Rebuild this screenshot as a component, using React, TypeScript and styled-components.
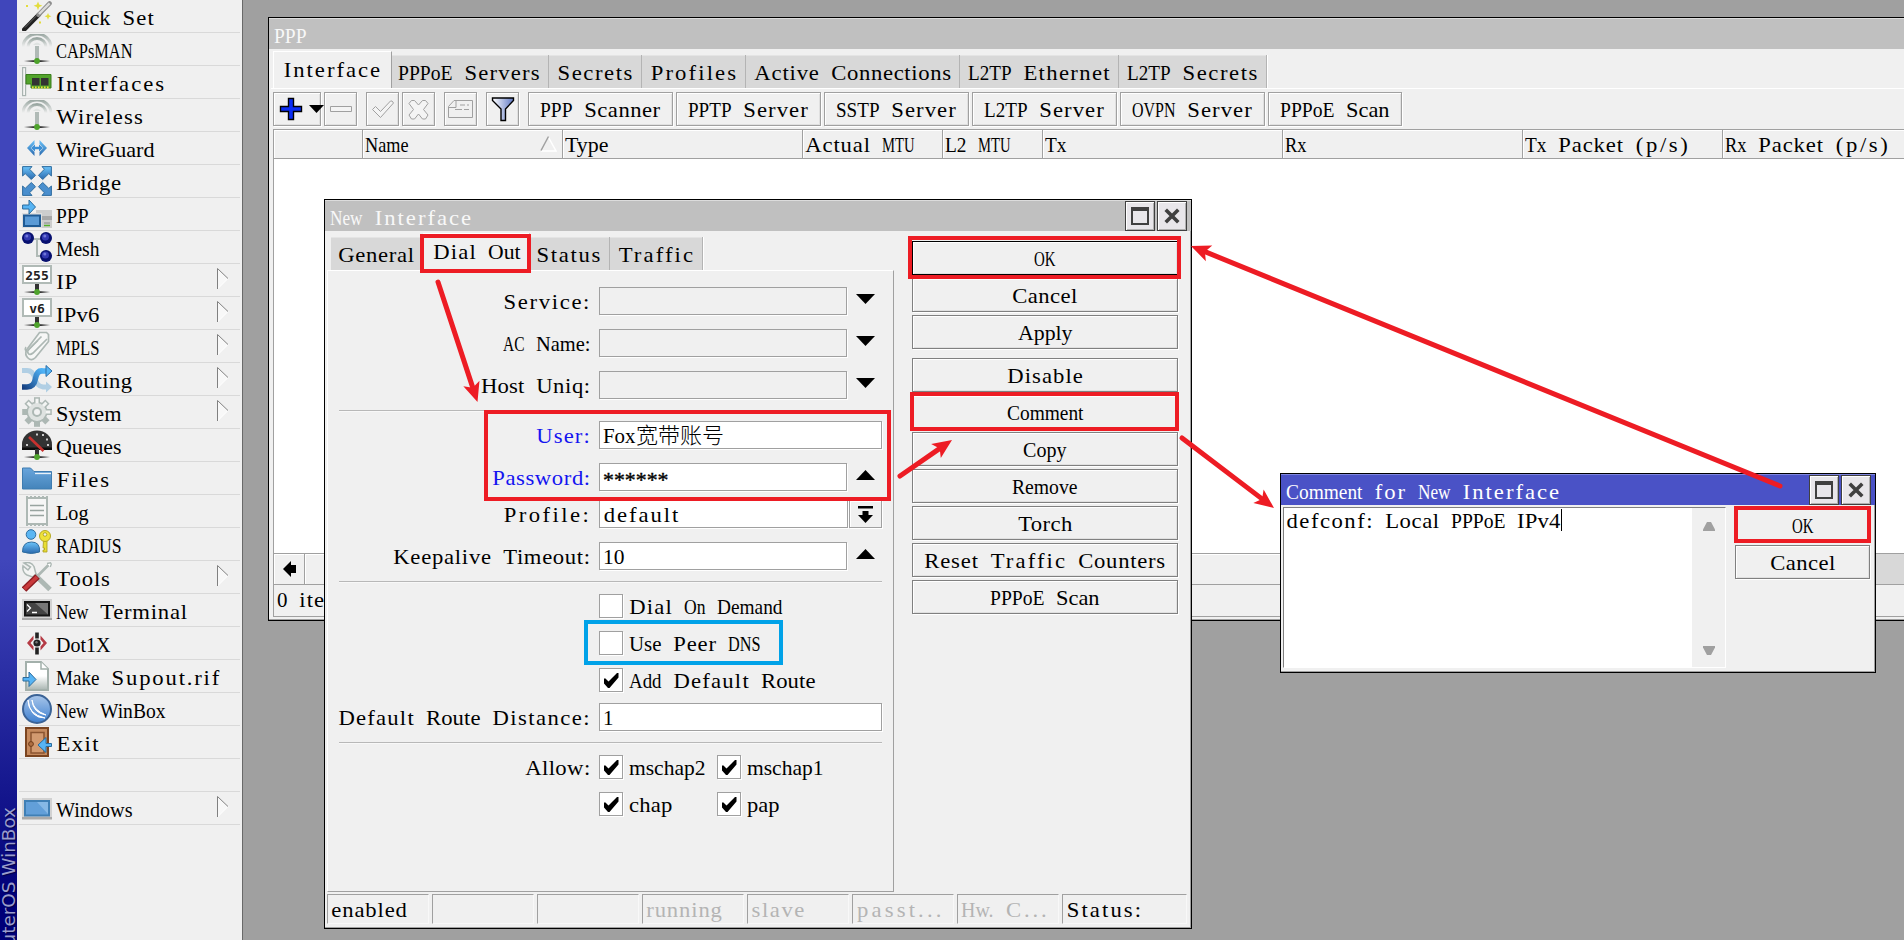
import React from "react";
import styled, { createGlobalStyle, css } from "styled-components";

const CELL = 11;
const SERIF = '"Liberation Serif", "Noto Sans CJK SC", serif';

const GlobalStyle = createGlobalStyle`
  * { box-sizing: border-box; }
  html, body { margin: 0; padding: 0; }
  body {
    width: 1904px;
    height: 940px;
    overflow: hidden;
    background: #a0a0a0;
    color: #000;
    font-family: ${SERIF};
    font-size: 22px;
    line-height: 24px;
  }
`;

/* ---------- cell-width text ---------- */

const Run = styled.span`
  display: inline-flex;
  white-space: pre;
  line-height: 24px;
  height: 24px;
  text-align: left;
`;
const Word = styled.span<{ $light?: boolean }>`
  display: block;
  flex: none;
  white-space: pre;
  transform-origin: 0 50%;
  font-weight: ${(p) => (p.$light ? 300 : 400)};
`;

let ctx: CanvasRenderingContext2D | null = null;
const measure = (s: string) => {
  if (!ctx) {
    ctx = document.createElement("canvas").getContext("2d");
    if (ctx) ctx.font = `22px ${SERIF}`;
  }
  return ctx ? ctx.measureText(s).width : s.length * CELL;
};

/* Fits each word to a fixed character grid: wide words are condensed, narrow ones spaced out. */
const MAX_STRETCH = 1.03;
const T = ({ children }: { children: string }) => (
  <Run>
    {(children.match(/[^\x00-\x7f]+| +|[!-~]+/g) || []).map((w, i) => {
      if (/[^\x00-\x7f]/.test(w)) return <Word key={i} $light>{w}</Word>;
      const target = w.length * CELL;
      if (w[0] === " ") return <Word key={i} style={{ width: target }}>{w}</Word>;
      const natural = measure(w);
      const scale = Math.min(MAX_STRETCH, (target - 0.5) / natural);
      const space = Math.max(0, (target - 0.5) / scale - natural) / w.length;
      return (
        <Word key={i} style={{ width: target, transform: `scaleX(${scale})`, letterSpacing: space, textIndent: space / 3 }}>
          {w}
        </Word>
      );
    })}
  </Run>
);

/* ---------- sidebar ---------- */

const Screen = styled.div`
  position: relative;
  display: flex;
  width: 1904px;
  height: 940px;
  overflow: hidden;
`;
const Brand = styled.div`
  width: 17px;
  height: 940px;
  flex: none;
  overflow: hidden;
  display: flex;
  align-items: flex-start;
  padding-top: 807px;
  background: linear-gradient(#4046bb 0, #4046bb 560px, #000078 900px);
  color: #9a9dcc;
  font: 18.4px/17px "DejaVu Sans", sans-serif;
  text-shadow: -1px 1px 1px #00004a;
`;
const BrandText = styled.span`
  writing-mode: vertical-rl;
  transform: rotate(180deg);
  white-space: nowrap;
`;
const Menu = styled.nav`
  width: 226px;
  height: 940px;
  flex: none;
  background: #f0f0f0;
  border-right: 1px solid #696969;
  padding: 0 2px;
`;
const MenuRow = styled.div`
  height: 33px;
  display: flex;
  align-items: center;
  border-bottom: 1px solid #d9d9d9;
  padding-left: 3px;
`;
const IconBox = styled.svg`
  width: 30px;
  height: 30px;
  flex: none;
  margin-right: 4px;
`;
const MenuLabel = styled.span`
  flex: 1;
  padding-top: 4px;
  height: 28px;
`;
const SubArrow = styled.svg`
  width: 12px;
  height: 22px;
  flex: none;
  margin: -3px 11px 0 0;
`;

const Antenna = (
  <>
    <path d="M1 13a14 13 0 0 1 28 0" fill="none" stroke="url(#fade)" strokeWidth="3" />
    <path d="M6 13a9 8.5 0 0 1 18 0" fill="none" stroke="url(#fade)" strokeWidth="3" />
    <path d="M11 11q4-5 8 0" fill="#dfe3e1" />
    <rect x="13" y="12" width="4" height="14" fill="#b0bab6" />
    <rect x="2" y="26.3" width="26" height="1.6" fill="url(#base)" />
    <circle cx="15" cy="27" r="2.9" fill="#4ea32b" />
  </>
);
const Plate = (label: string) => (
  <>
    <rect x="1" y="1" width="28" height="17" fill="#fff" stroke="#b0bab6" strokeWidth="2" />
    <text x="15" y="14.5" textAnchor="middle" fontFamily="DejaVu Sans Mono" fontWeight="bold" fontSize="13" fill="#222">{label}</text>
    <rect x="13" y="19" width="4" height="7" fill="#333" />
    <rect x="2" y="26.3" width="26" height="1.6" fill="url(#base)" />
    <circle cx="15" cy="27" r="2.9" fill="#4ea32b" />
  </>
);
const Ball = ({ x, y }: { x: number; y: number }) => (
  <>
    <circle cx={x} cy={y} r="6" fill="#07106f" />
    <circle cx={x - 0.6} cy={y - 1} r="3.6" fill="#3238b0" />
    <circle cx={x - 1.2} cy={y - 2} r="1.5" fill="#7077d8" />
  </>
);
const OUT_ARROW = "M.6 .6H10L7.6 3.2 13.5 9.3 9.3 13.5 3.2 7.6 .6 10Z";

const icons: Record<string, React.ReactNode> = {
  wand: (
    <>
      <path d="M2.2 28.6 17 13.5" stroke="#222" strokeWidth="4.4" strokeLinecap="round" />
      <path d="M3 26.5 16 13.3" stroke="#666" strokeWidth="1" />
      <path d="M16.6 13.8 27.6 2.4" stroke="#8d8d8d" strokeWidth="4.4" strokeLinecap="round" />
      <path d="M17 13 27.6 2.4" stroke="#dcdcdc" strokeWidth="2.4" />
      <path d="M16 .4 17.2 3.6 20.4 4.8 17.2 6 16 9.2 14.8 6 11.6 4.8 14.8 3.6ZM26 12 27 14.3 29.4 15.3 27 16.3 26 18.8 25 16.3 22.6 15.3 25 14.3Z" fill="#e3dc3c" />
      <path d="M4 4h2v2H4zM17 20.500h2v2h-2z" fill="#e3dc3c" />
    </>
  ),
  antenna: Antenna,
  card: (
    <>
      <rect x=".6" y=".6" width="3" height="28" fill="#f5f5f5" stroke="#a9b4b0" strokeWidth="1.2" />
      <path d="M4 7.500h25v13.500H9v-4H4z" fill="#53a42c" stroke="#3a7d1c" />
      <path d="M10 11h7.500v7.500H10zM19 11h7.500v7.500H19z" fill="#333" />
      <path d="M10 20.500h17" stroke="#e8e23c" strokeWidth="2" strokeDasharray="1.600 1.400" />
    </>
  ),
  guard: (
    <>
      <path d="M5 15 12.500 7v4L8.700 15l3.800 4v4zM25 15 17.500 7v4l3.800 4-3.800 4v4z" fill="url(#blue)" />
      <path d="M9 15l4-3.500v2.300h4v-2.300l4 3.500-4 3.500v-2.300h-4v2.300z" fill="#3b8fd6" />
    </>
  ),
  bridge: (
    <g fill="url(#blue)" stroke="#2f6d9f" strokeWidth="1">
      <path d={OUT_ARROW} />
      <path d={OUT_ARROW} transform="translate(30 0) scale(-1 1)" />
      <path d={OUT_ARROW} transform="translate(0 30) scale(1 -1)" fill="#4a8fce" />
      <path d={OUT_ARROW} transform="translate(30 30) scale(-1 -1)" fill="#4a8fce" />
    </g>
  ),
  ppp: (
    <>
      <rect x="14" y="11" width="16" height="18" fill="#cdcdcd" />
      <path d="M20 17h10v4H20z" fill="#a8a8a8" />
      <path d="M22 24h6" stroke="#888" />
      <path d="M22 26.500h6" stroke="#55b02c" strokeWidth="1.500" />
      <rect x="0" y="14" width="20" height="15" fill="#dedede" />
      <rect x="2" y="16.500" width="16" height="10.500" fill="#5b9bd6" stroke="#1f5b95" strokeWidth="2" />
      <path d="M.6 6h6.400V1l6.500 7-6.500 7v-5H.6z" fill="#57b4f4" stroke="#2b6c9e" />
    </>
  ),
  mesh: (
    <>
      <path d="M8 7h14M15 7v17h8" fill="none" stroke="#b0bab6" strokeWidth="2" />
      <Ball x={6} y={6} />
      <Ball x={24} y={6} />
      <Ball x={24} y={24} />
    </>
  ),
  ip: Plate("255"),
  ip6: Plate("v6"),
  clip: (
    <>
      <path d="M17.500 1.500h7l2 2v7L13.500 26.500q-4 4-7.500.5t-1.500-8z" fill="#f6f7f6" stroke="#adb8b4" strokeWidth="1.700" />
      <path d="M25 8 11 22q-3 2.500-4.700.5T7 18L19.500 5.500" fill="none" stroke="#adb8b4" strokeWidth="1.700" />
      <path d="M4 16q-2 3 1 5M6 19.500l10-10" fill="none" stroke="#adb8b4" strokeWidth="1.400" />
    </>
  ),
  routing: (
    <>
      <path d="M0 6.500h5q6 0 8 8t8 8.500h4" fill="none" stroke="#b1cfe4" strokeWidth="5" />
      <path d="M24 17.500 30 23l-6 5.500z" fill="#b1cfe4" />
      <path d="M0 23h5q7 0 8.500-8.500T21 7h3" fill="none" stroke="url(#deep)" strokeWidth="5.500" />
      <path d="M24 1.500 30 7l-6 5.500z" fill="#55b5f5" stroke="#2c6fa8" />
    </>
  ),
  gear: (
    <>
      <g fill="#adb8b4">
        {[0, 45, 90, 135].map((a) => (
          <rect key={a} x="12" y=".2" width="6" height="29.600" transform={`rotate(${a} 15 15)`} />
        ))}
        <circle cx="15" cy="15" r="10.500" />
      </g>
      <g fill="#f4f5f4">
        {[0, 45, 90, 135].map((a) => (
          <rect key={a} x="13.500" y="1.700" width="3" height="13" transform={`rotate(${a - 45} 15 15)`} />
        ))}
        <circle cx="15" cy="15" r="9" fill="#dfe3e1" />
      </g>
      <circle cx="15" cy="15" r="4" fill="#f2f2f2" stroke="#adb8b4" strokeWidth="2" />
    </>
  ),
  gauge: (
    <>
      <path d="M0 19V14.500a15 14 0 0 1 30 0V19z" fill="#333" />
      <path d="M0 17.500h30V20H0z" fill="#0d0d0d" />
      <path d="M4 14h2v2H4zM7 7h2v2H7zM14 3.500h2v2h-2zM20 4h2v2h-2zM24 8.500h2v2h-2zM25 14h2v2h-2z" fill="#ccc" />
      <rect x="13" y="19" width="4" height="7" fill="#333" />
      <path d="M7 7 21.500 21" stroke="#c8322f" strokeWidth="2.600" />
      <rect x="2" y="26.300" width="26" height="1.600" fill="url(#base)" />
      <circle cx="15" cy="27" r="2.900" fill="#4ea32b" />
    </>
  ),
  folder: (
    <>
      <path d="M.5 5h8l3.500 3.500h17.500V26H.5z" fill="url(#folder)" stroke="#3f7cb0" />
      <path d="M13 10.500h16" stroke="#e9f1f8" strokeWidth="1.300" />
    </>
  ),
  log: (
    <>
      <path d="M5 2h20v26H5z" fill="#f6f6f6" stroke="#adb8b4" strokeWidth="2" />
      <path d="M4 1h22M4 29h22" stroke="#adb8b4" strokeWidth="2" strokeDasharray="2 2" />
      <path d="M8 9.500h14M8 14.500h14M8 19.500h14" stroke="#98a4a0" strokeWidth="1.600" />
    </>
  ),
  radius: (
    <>
      <path d="M.5 23q0-10 9-10t8 10q-8 3-17 0z" fill="url(#blue)" stroke="#2f6d9f" />
      <circle cx="9" cy="5.500" r="4.800" fill="#5bb6f3" stroke="#2f6d9f" />
      <path d="M21.500 12h3.500v11h-4v-2h1.500v-2H21z" fill="#e8dd35" stroke="#aa9d1c" strokeWidth=".8" />
      <circle cx="23" cy="7" r="5.500" fill="#eee13a" stroke="#b5a822" />
      <circle cx="23" cy="5.500" r="1.800" fill="#f0f0f0" stroke="#b5a822" />
    </>
  ),
  tools: (
    <>
      <path d="M13 13 28 27.500" stroke="#adb8b4" strokeWidth="5" />
      <path d="M2 1Q9-1 12 4.500L14 12l-3.500 3L5 13Q0 10 1 4l5 4 2.500-3z" fill="#f4f5f4" stroke="#adb8b4" strokeWidth="1.500" />
      <path d="M14 15.500 27.500 2" stroke="#adb8b4" strokeWidth="2.600" />
      <path d="M25 1.500 28.500.8l.8 1.200-1 3" fill="#fff" stroke="#adb8b4" strokeWidth="1.300" />
      <path d="M2 27.500 15.500 14.500" stroke="#8d1d22" strokeWidth="6.500" />
      <path d="M2.500 27 15 15" stroke="#c93a3c" strokeWidth="3.800" />
    </>
  ),
  terminal: (
    <>
      <path d="M0 4h30v19H0z" fill="#d2d2d2" />
      <path d="M0 23h30v2H0z" fill="#aaa" />
      <path d="M2 6h26v15.500H2z" fill="#151515" />
      <path d="M4 8h22v11.500H4z" fill="#444" />
      <path d="M13 8h13v11.500z" fill="#777" />
      <path d="M5 9.500l3.500 3.500L5 16.500M10 17.500h5" fill="none" stroke="#fff" strokeWidth="1.300" />
    </>
  ),
  dot: (
    <>
      <path d="M13.200 4.500h3.600v6h-3.600zM13.200 19.500h3.600v7h-3.600z" fill="#222" />
      <path d="M11.500 7.500v4L8.500 15l3 3.500v4L5 15zM18.500 7.500v4l3 3.500-3 3.500v4L25 15z" fill="#b53b45" />
      <circle cx="15" cy="15" r="3.600" fill="#222" />
      <circle cx="14.500" cy="14.200" r="1.200" fill="#777" />
    </>
  ),
  file: (
    <>
      <path d="M4 1h15l7 7v21H4z" fill="url(#paper)" stroke="#a3b0ab" strokeWidth="2" />
      <path d="M19 1v7h7" fill="#fff" stroke="#a3b0ab" strokeWidth="1.500" />
      <path d="M1 16.500h6V11l7 7.500-7 7V20H1z" fill="#57b4f4" stroke="#2b6c9e" />
    </>
  ),
  winbox: (
    <>
      <circle cx="15" cy="15" r="14" fill="url(#orb)" stroke="#3b6396" strokeWidth="2" />
      <path d="M6 6q0 14 17 18-15 0-17-18zM10 6q1 10 14 15-13-2-14-15z" fill="#fff" stroke="#fff" strokeWidth="1" />
    </>
  ),
  exit: (
    <>
      <rect x="4" y="1" width="22" height="28" fill="#c58a5e" stroke="#7b4521" strokeWidth="2" />
      <path d="M9 5.500h13V26H9z" fill="#d29a70" stroke="#8a5430" strokeWidth="1.500" />
      <circle cx="9" cy="17" r="2.400" fill="#b06f42" stroke="#6f3c1a" />
      <path d="M29.500 16.500h-5.500V10.500L16 18l8 7.500v-6h5.500z" fill="#57b4f4" stroke="#2b6c9e" />
    </>
  ),
  windows: (
    <>
      <path d="M0 5h30v19H0z" fill="#d2d2d2" />
      <path d="M0 24h30v2.500H0z" fill="#aaa" />
      <rect x="3" y="8" width="24" height="14.500" fill="#629fd9" stroke="#3f7fb5" strokeWidth="2" />
      <path d="M15 9h11v12z" fill="#86b8e6" />
    </>
  ),
};

const menu: { icon?: string; label?: string; sub?: boolean }[] = [
  { icon: "wand", label: "Quick Set" },
  { icon: "antenna", label: "CAPsMAN" },
  { icon: "card", label: "Interfaces" },
  { icon: "antenna", label: "Wireless" },
  { icon: "guard", label: "WireGuard" },
  { icon: "bridge", label: "Bridge" },
  { icon: "ppp", label: "PPP" },
  { icon: "mesh", label: "Mesh" },
  { icon: "ip", label: "IP", sub: true },
  { icon: "ip6", label: "IPv6", sub: true },
  { icon: "clip", label: "MPLS", sub: true },
  { icon: "routing", label: "Routing", sub: true },
  { icon: "gear", label: "System", sub: true },
  { icon: "gauge", label: "Queues" },
  { icon: "folder", label: "Files" },
  { icon: "log", label: "Log" },
  { icon: "radius", label: "RADIUS" },
  { icon: "tools", label: "Tools", sub: true },
  { icon: "terminal", label: "New Terminal" },
  { icon: "dot", label: "Dot1X" },
  { icon: "file", label: "Make Supout.rif" },
  { icon: "winbox", label: "New WinBox" },
  { icon: "exit", label: "Exit" },
  {},
  { icon: "windows", label: "Windows", sub: true },
];

const Gradients = styled.svg`
  position: absolute;
  width: 0;
  height: 0;
`;

const Sidebar = () => (
  <>
    <Gradients>
      <defs>
        <linearGradient id="fade" x1="0" y1="0" x2="0" y2="1">
          <stop offset="0" stopColor="#9aa7a2" />
          <stop offset="1" stopColor="#f0f0f0" />
        </linearGradient>
        <linearGradient id="base">
          <stop offset="0" stopColor="#eee" />
          <stop offset=".35" stopColor="#222" />
          <stop offset=".65" stopColor="#222" />
          <stop offset="1" stopColor="#eee" />
        </linearGradient>
        <linearGradient id="blue" x1="0" y1="0" x2="0" y2="1">
          <stop offset="0" stopColor="#6cc4fa" />
          <stop offset="1" stopColor="#2a69ae" />
        </linearGradient>
        <linearGradient id="deep" gradientUnits="userSpaceOnUse" x1="0" y1="24" x2="20" y2="6">
          <stop offset="0" stopColor="#143c7c" />
          <stop offset="1" stopColor="#4eb2f6" />
        </linearGradient>
        <linearGradient id="folder" x1="0" y1="0" x2="0" y2="1">
          <stop offset="0" stopColor="#69a5dc" />
          <stop offset="1" stopColor="#4484ba" />
        </linearGradient>
        <linearGradient id="paper" x1="0" y1="0" x2="0" y2="1">
          <stop offset=".5" stopColor="#fff" />
          <stop offset="1" stopColor="#a9b5b1" />
        </linearGradient>
        <linearGradient id="orb" x1="0" y1="0" x2="0" y2="1">
          <stop offset="0" stopColor="#a9c6ea" />
          <stop offset="1" stopColor="#3f80d0" />
        </linearGradient>
        <linearGradient id="funnel">
          <stop offset="0" stopColor="#fff" />
          <stop offset="1" stopColor="#5f78c4" />
        </linearGradient>
      </defs>
    </Gradients>
    <Brand>
      <BrandText>RouterOS WinBox</BrandText>
    </Brand>
    <Menu>
      {menu.map((m, i) => (
        <MenuRow key={i}>
          {m.icon && <IconBox viewBox="0 0 30 30">{icons[m.icon]}</IconBox>}
          {m.label && (
            <MenuLabel>
              <T>{m.label}</T>
            </MenuLabel>
          )}
          {m.sub && (
            <SubArrow viewBox="0 0 12 22">
              <path d="M.5.5 11 10.500.5 21z" fill="#f8f8f8" />
              <path d="M.5 21 11 10.500" stroke="#fff" />
              <path d="M.5 21V.5L11 10.500" fill="none" stroke="#808080" />
            </SubArrow>
          )}
        </MenuRow>
      ))}
    </Menu>
  </>
);

/* ---------- windows ---------- */

const Frame = styled.section<{ $x: number; $y: number; $w: number; $h: number }>`
  position: absolute;
  left: ${(p) => p.$x}px;
  top: ${(p) => p.$y}px;
  width: ${(p) => p.$w}px;
  height: ${(p) => p.$h}px;
  display: flex;
  flex-direction: column;
  background: #f0f0f0;
  border: 1px solid #000;
  box-shadow: inset -1px -1px 0 #a0a0a0;
`;
const TitleBar = styled.header<{ $active?: boolean }>`
  height: 31px;
  flex: none;
  display: flex;
  background: ${(p) => (p.$active ? "#4a52c6" : "#c0c0c0")};
  border-top: 1px solid ${(p) => (p.$active ? "#7f86e0" : "#dcdcdc")};
  color: ${(p) => (p.$active ? "#fff" : "#f8f8f8")};
  padding: 0 4px 0 5px;
`;
const TitleText = styled.h1`
  flex: 1;
  margin: 0;
  padding-top: 5px;
  font: inherit;
`;
const WinButton = styled.button`
  width: 30px;
  height: 30px;
  flex: none;
  padding: 0;
  margin-left: 2px;
  border: 1px solid #404040;
  background: #e8e6ea;
  box-shadow: inset 1px 1px 0 #fff, inset -1px -1px 0 #b0b0b0;
  display: flex;
  align-items: center;
  justify-content: center;
`;
const Glyph = styled.svg`
  width: 18px;
  height: 18px;
`;
const WinButtons = () => (
  <>
    <WinButton>
      <Glyph viewBox="0 0 18 18">
        <path d="M1 1h16v16H1z" fill="none" stroke="#404040" strokeWidth="2" />
        <path d="M0 0h18v4H0z" fill="#404040" />
      </Glyph>
    </WinButton>
    <WinButton>
      <Glyph viewBox="0 0 18 18">
        <path d="M4 4l10 10M14 4l-10 10" stroke="#404040" strokeWidth="3.600" strokeLinecap="square" />
      </Glyph>
    </WinButton>
  </>
);

const Tabs = styled.div`
  display: flex;
  align-items: flex-end;
  flex: none;
`;
const Tab = styled.div<{ $w: number; $active?: boolean }>`
  width: ${(p) => p.$w}px;
  display: flex;
  height: ${(p) => (p.$active ? 37 : 33)}px;
  ${(p) =>
    p.$active
      ? css`
          background: #f0f0f0;
          border: 1px solid;
          border-color: #fff #a0a0a0 #f0f0f0 #fff;
          border-bottom: 0;
          justify-content: center;
          padding: 6px 0 0 0;
        `
      : css`
          background: #d8d8d8;
          border-right: 1px solid #b4b4b4;
          box-shadow: inset 0 1px 0 #e4e4e4, 1px 0 0 #fff;
          justify-content: flex-end;
          padding: 6px 7px 0 0;
        `}
`;

const Button = styled.button<{ $default?: boolean; $strong?: boolean }>`
  height: 34px;
  flex: none;
  padding: 5px 11px 0;
  display: flex;
  justify-content: center;
  align-items: flex-start;
  font: inherit;
  color: #000;
  background: #f0f0f0;
  border: 1px solid ${(p) => (p.$default ? "#000" : p.$strong ? "#808080" : "#a0a0a0")};
  box-shadow: inset 1px 1px 0 #fff, inset -1px -1px 0 #e0e0e0, 1px 1px 0 #fff;
`;

/* PPP window */

const Toolbar = styled.div`
  display: flex;
  height: 41px;
  flex: none;
  margin-left: 2px;
  border-top: 1px solid #fff;
  padding: 3px 0 0 2px;
  gap: 3px;
`;
const ToolButton = styled(Button)<{ $w: number; $gap?: number }>`
  width: ${(p) => p.$w}px;
  margin-left: ${(p) => p.$gap || 0}px;
  padding: 0;
  align-items: center;
`;
const ScannerButton = styled(Button)`
  margin-left: 6px;
`;
const ToolIcon = styled.svg<{ $w?: number }>`
  width: ${(p) => p.$w || 29}px;
  height: 30px;
  flex: none;
  overflow: visible;
`;
const Grid = styled.div`
  flex: 1;
  display: flex;
  flex-direction: column;
  margin: 0 0 0 4px;
  background: #fff;
  border-top: 1px solid #a0a0a0;
  border-left: 1px solid #a0a0a0;
`;
const HeadRow = styled.div`
  display: flex;
  flex: none;
  height: 29px;
  background: #f0f0f0;
  border-bottom: 1px solid #a0a0a0;
`;
const HeadCell = styled.div<{ $w: number }>`
  width: ${(p) => p.$w}px;
  flex: none;
  display: flex;
  justify-content: space-between;
  padding: 3px 5px 0 2px;
  border-right: 1px solid #a0a0a0;
  box-shadow: inset 1px 1px 0 #fff;
  white-space: nowrap;
`;
const Body = styled.div`
  flex: 1;
`;
const SortIcon = styled.svg`
  width: 17px;
  height: 16px;
  margin-top: 3px;
`;
const ScrollRow = styled.div`
  height: 32px;
  flex: none;
  display: flex;
  background: #d8d8d8;
  border-top: 1px solid #a0a0a0;
  border-bottom: 1px solid #a0a0a0;
`;
const ScrollBox = styled.div<{ $w: number }>`
  width: ${(p) => p.$w}px;
  background: #f0f0f0;
  border-right: 1px solid #a0a0a0;
  box-shadow: inset 1px 1px 0 #fff;
  display: flex;
  align-items: center;
  justify-content: center;
`;
const ItemBar = styled.footer`
  height: 32px;
  flex: none;
  margin-left: 4px;
  margin-bottom: 3px;
  border-left: 1px solid #a0a0a0;
  padding: 3px 0 0 3px;
  background: #f0f0f0;
  border-bottom: 1px solid #a0a0a0;
  white-space: nowrap;
`;

const columns: [string, number][] = [
  ["", 89],
  ["Name", 200],
  ["Type", 240],
  ["Actual MTU", 140],
  ["L2 MTU", 100],
  ["Tx", 240],
  ["Rx", 240],
  ["Tx Packet (p/s)", 200],
  ["Rx Packet (p/s)", 200],
];

const TabsIndent = styled.div`
  padding: 2px 0 0 4px;
`;

const PppWindow = () => (
  <Frame $x={268} $y={17} $w={1700} $h={604}>
    <TitleBar>
      <TitleText>
        <T>PPP</T>
      </TitleText>
    </TitleBar>
    <TabsIndent>
      <Tabs>
        <Tab $w={119} $active><T>Interface</T></Tab>
        <Tab $w={157}><T>PPPoE Servers</T></Tab>
        <Tab $w={93}><T>Secrets</T></Tab>
        <Tab $w={104}><T>Profiles</T></Tab>
        <Tab $w={214}><T>Active Connections</T></Tab>
        <Tab $w={159}><T>L2TP Ethernet</T></Tab>
        <Tab $w={148}><T>L2TP Secrets</T></Tab>
      </Tabs>
    </TabsIndent>
    <Toolbar>
      <ToolButton $w={48}>
        <ToolIcon $w={46} viewBox="0 0 46 30">
          <path d="M14.500 4.500h5v8h8v5h-8v8h-5v-8h-8v-5h8z" fill="#0a2cf5" stroke="#000" strokeWidth="1.400" />
          <path d="M35 11h15L42.500 19z" fill="#000" />
        </ToolIcon>
      </ToolButton>
      <ToolButton $w={33}>
        <ToolIcon viewBox="0 0 29 30">
          <path d="M4.500 12.500h21v5h-21z" fill="#f4f4f4" stroke="#a0a0a0" />
        </ToolIcon>
      </ToolButton>
      <ToolButton $w={33} $gap={6}>
        <ToolIcon viewBox="0 0 29 30">
          <path d="M4.500 15.500l3-3 5 5 10-10.500h1.500l1.500 2L12.500 23.500z" fill="#f4f4f4" stroke="#a0a0a0" />
        </ToolIcon>
      </ToolButton>
      <ToolButton $w={33}>
        <ToolIcon viewBox="0 0 29 30">
          <path d="M7.500 6.500h3l4 4.500 4-4.500h3l2.500 3L19.500 15.500l4.500 5.500-2.500 4h-3l-4-5-4 5h-3L5 21l4.500-5.500L5 9.500z" fill="#f4f4f4" stroke="#a0a0a0" />
        </ToolIcon>
      </ToolButton>
      <ToolButton $w={33} $gap={6}>
        <ToolIcon viewBox="0 0 29 30">
          <path d="M10 6.500h16.500v17h-24V12.500L8 6.500h2v7H3M14 11h5m2 0h2M9 15.500h7m2 0h5" fill="none" stroke="#a0a0a0" />
        </ToolIcon>
      </ToolButton>
      <ToolButton $w={33} $gap={6}>
        <ToolIcon viewBox="0 0 29 30">
          <path d="M4.500 4h21v2.500L17.500 15v11.500h-4.500V15L4.500 6.500z" fill="url(#funnel)" stroke="#000" strokeWidth="1.400" />
        </ToolIcon>
      </ToolButton>
      <ScannerButton><T>PPP Scanner</T></ScannerButton>
      <Button><T>PPTP Server</T></Button>
      <Button><T>SSTP Server</T></Button>
      <Button><T>L2TP Server</T></Button>
      <Button><T>OVPN Server</T></Button>
      <Button><T>PPPoE Scan</T></Button>
    </Toolbar>
    <Grid>
      <HeadRow>
        {columns.map(([name, w]) => (
          <HeadCell key={name} $w={w}>
            <T>{name}</T>
            {name === "Name" && (
              <SortIcon viewBox="0 0 17 16">
                <path d="M8 .5 16 15H1" fill="none" stroke="#fff" strokeWidth="1.500" />
                <path d="M1 14.500 8.500.5" stroke="#a0a0a0" strokeWidth="1.500" />
              </SortIcon>
            )}
          </HeadCell>
        ))}
      </HeadRow>
      <Body />
      <ScrollRow>
        <ScrollBox $w={31}>
          <ToolIcon $w={13} viewBox="0 0 13 30">
            <path d="M0 15 8 7v4h5v8H8v4z" fill="#000" />
          </ToolIcon>
        </ScrollBox>
        <ScrollBox $w={1100} />
      </ScrollRow>
    </Grid>
    <ItemBar>
      <T>0 items</T>
    </ItemBar>
  </Frame>
);

/* New Interface dialog */

const DialogBody = styled.div`
  flex: none;
  display: flex;
  height: 661px;
`;
const Left = styled.div`
  width: 569px;
  padding: 2px 0 0 2px;
  flex: none;
`;
const DialogTabs = styled(Tabs)`
  padding-left: 4px;
`;
const Panel = styled.div`
  height: 622px;
  border: 1px solid;
  border-color: #fff #a0a0a0 #a0a0a0 #fff;
  padding: 16px 11px 0 11px;
`;
const Field = styled.div<{ $mb: number }>`
  display: flex;
  margin-bottom: ${(p) => p.$mb}px;
`;
const Label = styled.label<{ $changed?: boolean; $up?: boolean }>`
  width: 252px;
  height: 24px;
  margin-right: 8px;
  display: flex;
  justify-content: flex-end;
  padding-top: ${(p) => (p.$up ? 1 : 3)}px;
  color: ${(p) => (p.$changed ? "#1414f0" : "#000")};
`;
const Input = styled.div<{ $wide?: boolean; $off?: boolean; $w?: number; $low?: boolean }>`
  width: ${(p) => p.$w || (p.$wide ? 283 : 248)}px;
  height: 28px;
  flex: none;
  border: 1px solid #a0a0a0;
  box-shadow: 1px 1px 0 #fff;
  background: ${(p) => (p.$off ? "#f0f0f0" : "#fff")};
  padding: ${(p) => (p.$low ? 4 : 2)}px 0 0 3px;
  -webkit-text-stroke: ${(p) => (p.$low ? "0.4px #000" : "0")};
`;
const Tri = styled.svg`
  width: 19px;
  height: 10px;
  margin: 7px 0 0 9px;
`;
const DropButton = styled.div`
  width: 33px;
  height: 28px;
  margin-left: 1px;
  border: 1px solid #a0a0a0;
  box-shadow: inset 1px 1px 0 #fff, 1px 1px 0 #fff;
  display: flex;
  align-items: center;
  justify-content: center;
`;
const Rule = styled.hr<{ $mb: number }>`
  height: 2px;
  margin: 0 0 ${(p) => p.$mb}px;
  border: 0;
  border-top: 1px solid #b8b8b8;
  border-bottom: 1px solid #f8f8f8;
`;
const CheckItem = styled.div<{ $w?: number }>`
  display: flex;
  height: 24px;
  width: ${(p) => (p.$w ? p.$w + "px" : "auto")};
`;
const Box = styled.span`
  width: 24px;
  height: 24px;
  flex: none;
  border: 1px solid #a0a0a0;
  background: #fff;
  box-shadow: 1px 1px 0 #fff;
  margin-right: 6px;
`;
const CheckText = styled.span`
  display: block;
  height: 24px;
  padding-top: 1px;
`;
const TickSvg = styled.svg`
  display: block;
  width: 22px;
  height: 22px;
`;
const Check = ({ label, on, w }: { label: string; on?: boolean; w?: number }) => (
  <CheckItem $w={w}>
    <Box>
      {on && (
        <TickSvg viewBox="0 0 22 22">
          <path d="M4 9.500h1.500L8.500 12.500 17 4h1.500v4.500L9.500 19H8L4 14.500z" fill="#000" />
        </TickSvg>
      )}
    </Box>
    <CheckText>
      <T>{label}</T>
    </CheckText>
  </CheckItem>
);
const Down = () => (
  <Tri viewBox="0 0 19 10">
    <path d="M0 0h19L9.500 10z" />
  </Tri>
);
const Up = () => (
  <Tri viewBox="0 0 19 10">
    <path d="M0 10h19L9.500 0z" />
  </Tri>
);
const Side = styled.div`
  width: 266px;
  margin: 10px 0 0 18px;
  display: flex;
  flex-direction: column;
  gap: 3px;
`;
const Gap = styled.div`
  height: 3px;
`;
const StatusBar = styled.footer`
  display: flex;
  gap: 3px;
  padding: 2px 4px 0 2px;
`;
const StatusCell = styled.div<{ $dim?: boolean; $grow?: boolean }>`
  width: 102px;
  ${(p) => p.$grow && "flex: 1;"}
  height: 30px;
  border: 1px solid;
  border-color: #a0a0a0 #f8f8f8 #f8f8f8 #a0a0a0;
  padding: 3px 0 0 3px;
  color: ${(p) => (p.$dim ? "#b4b4b4" : "#000")};
  white-space: nowrap;
`;

const NewInterface = () => (
  <Frame $x={324} $y={199} $w={868} $h={730}>
    <TitleBar>
      <TitleText>
        <T>New Interface</T>
      </TitleText>
      <WinButtons />
    </TitleBar>
    <DialogBody>
      <Left>
        <DialogTabs>
          <Tab $w={92}><T>General</T></Tab>
          <Tab $w={107} $active><T>Dial Out</T></Tab>
          <Tab $w={80}><T>Status</T></Tab>
          <Tab $w={93}><T>Traffic</T></Tab>
        </DialogTabs>
        <Panel>
          <Field $mb={14}><Label><T>Service:</T></Label><Input $off /><Down /></Field>
          <Field $mb={14}><Label><T>AC Name:</T></Label><Input $off /><Down /></Field>
          <Field $mb={11}><Label><T>Host Uniq:</T></Label><Input $off /><Down /></Field>
          <Rule $mb={9} />
          <Field $mb={14}><Label $changed><T>User:</T></Label><Input $wide><T>Fox宽带账号</T></Input></Field>
          <Field $mb={9}><Label $changed><T>Password:</T></Label><Input $low><T>******</T></Input><Up /></Field>
          <Field $mb={14}>
            <Label><T>Profile:</T></Label>
            <Input $w={249}><T>default</T></Input>
            <DropButton>
              <ToolIcon $w={16} viewBox="0 0 16 30">
                <path d="M0 7h15v2.500H0zM4.500 12h6v4H15l-7.500 8L0 16h4.500z" fill="#000" />
              </ToolIcon>
            </DropButton>
          </Field>
          <Field $mb={11}><Label><T>Keepalive Timeout:</T></Label><Input><T>10</T></Input><Up /></Field>
          <Rule $mb={11} />
          <Field $mb={13}><Label /><Check label="Dial On Demand" /></Field>
          <Field $mb={13}><Label /><Check label="Use Peer DNS" /></Field>
          <Field $mb={11}><Label /><Check label="Add Default Route" on /></Field>
          <Field $mb={11}><Label><T>Default Route Distance:</T></Label><Input $wide><T>1</T></Input></Field>
          <Rule $mb={11} />
          <Field $mb={13}><Label $up><T>Allow:</T></Label><Check label="mschap2" on w={118} /><Check label="mschap1" on /></Field>
          <Field $mb={0}><Label /><Check label="chap" on w={118} /><Check label="pap" on /></Field>
        </Panel>
      </Left>
      <Side>
        <Button $default><T>OK</T></Button>
        <Button $strong><T>Cancel</T></Button>
        <Button $strong><T>Apply</T></Button>
        <Gap />
        <Button $strong><T>Disable</T></Button>
        <Button $strong><T>Comment</T></Button>
        <Button $strong><T>Copy</T></Button>
        <Button $strong><T>Remove</T></Button>
        <Button $strong><T>Torch</T></Button>
        <Button $strong><T>Reset Traffic Counters</T></Button>
        <Button $strong><T>PPPoE Scan</T></Button>
      </Side>
    </DialogBody>
    <StatusBar>
      <StatusCell><T>enabled</T></StatusCell>
      <StatusCell />
      <StatusCell />
      <StatusCell $dim><T>running</T></StatusCell>
      <StatusCell $dim><T>slave</T></StatusCell>
      <StatusCell $dim><T>passt...</T></StatusCell>
      <StatusCell $dim><T>Hw. C...</T></StatusCell>
      <StatusCell $grow><T>Status:</T></StatusCell>
    </StatusBar>
  </Frame>
);

/* Comment dialog */

const CommentBody = styled.div`
  display: flex;
  flex: 1;
  padding: 2px 5px 4px 2px;
`;
const Editor = styled.div`
  width: 443px;
  flex: none;
  display: flex;
  background: #fff;
  border: 1px solid;
  border-color: #808080 #fff #fff #808080;
`;
const EditText = styled.div`
  flex: 1;
  padding: 1px 0 0 2px;
  display: flex;
  align-items: flex-start;
`;
const Caret = styled.span`
  width: 1px;
  height: 22px;
  background: #000;
`;
const EditScroll = styled.div`
  width: 33px;
  background: #f0f0f0;
  display: flex;
  flex-direction: column;
  justify-content: space-between;
  align-items: center;
  padding: 14px 0 12px 0;
`;
const SmallTri = styled.svg`
  width: 12px;
  height: 9px;
`;
const CommentSide = styled.div`
  width: 135px;
  margin-left: 9px;
  display: flex;
  flex-direction: column;
  gap: 3px;
  padding-top: 1px;
`;

const CommentDialog = () => (
  <Frame $x={1280} $y={473} $w={596} $h={200}>
    <TitleBar $active>
      <TitleText>
        <T>Comment for New Interface</T>
      </TitleText>
      <WinButtons />
    </TitleBar>
    <CommentBody>
      <Editor>
        <EditText>
          <T>defconf: Local PPPoE IPv4</T>
          <Caret />
        </EditText>
        <EditScroll>
          <SmallTri viewBox="0 0 12 9"><path d="M0 9V7.500L4 0h4l4 7.500V9z" fill="#a0a0a0" /></SmallTri>
          <SmallTri viewBox="0 0 12 9"><path d="M0 0v1.500L4 9h4l4-7.500V0z" fill="#a0a0a0" /></SmallTri>
        </EditScroll>
      </Editor>
      <CommentSide>
        <Button $default><T>OK</T></Button>
        <Button $strong><T>Cancel</T></Button>
      </CommentSide>
    </CommentBody>
  </Frame>
);

/* ---------- callouts ---------- */

const Mark = styled.div<{ $x: number; $y: number; $w: number; $h: number; $blue?: boolean }>`
  position: absolute;
  left: ${(p) => p.$x}px;
  top: ${(p) => p.$y}px;
  width: ${(p) => p.$w}px;
  height: ${(p) => p.$h}px;
  border: 4px solid ${(p) => (p.$blue ? "#00a2e8" : "#ed1c24")};
`;
const ArrowLayer = styled.svg`
  position: absolute;
  inset: 0;
  width: 1904px;
  height: 940px;
`;
const Arrow = ({ from, to }: { from: [number, number]; to: [number, number] }) => {
  const len = Math.hypot(to[0] - from[0], to[1] - from[1]);
  const deg = (Math.atan2(to[1] - from[1], to[0] - from[0]) * 180) / Math.PI;
  return (
    <g transform={`translate(${to[0]} ${to[1]}) rotate(${deg})`}>
      <path d={`M${-len} 0H-13`} stroke="#ed1c24" strokeWidth="5" strokeLinecap="round" />
      <path d="M0 0-19.500-8.500-15 0-19.500 8.500z" fill="#ed1c24" />
    </g>
  );
};

export default function App() {
  return (
    <Screen>
      <GlobalStyle />
      <Sidebar />
      <PppWindow />
      <NewInterface />
      <CommentDialog />
      <Mark $x={420} $y={234} $w={111} $h={39} />
      <Mark $x={484} $y={410} $w={407} $h={91} />
      <Mark $x={584} $y={620} $w={199} $h={45} $blue />
      <Mark $x={908} $y={236} $w={273} $h={43} />
      <Mark $x={910} $y={392} $w={269} $h={39} />
      <Mark $x={1734} $y={506} $w={137} $h={37} />
      <ArrowLayer>
        <Arrow from={[438, 282]} to={[477.5, 402]} />
        <Arrow from={[900, 476]} to={[952, 440]} />
        <Arrow from={[1182, 438]} to={[1274, 508]} />
        <Arrow from={[1780, 486]} to={[1191, 246]} />
      </ArrowLayer>
    </Screen>
  );
}
